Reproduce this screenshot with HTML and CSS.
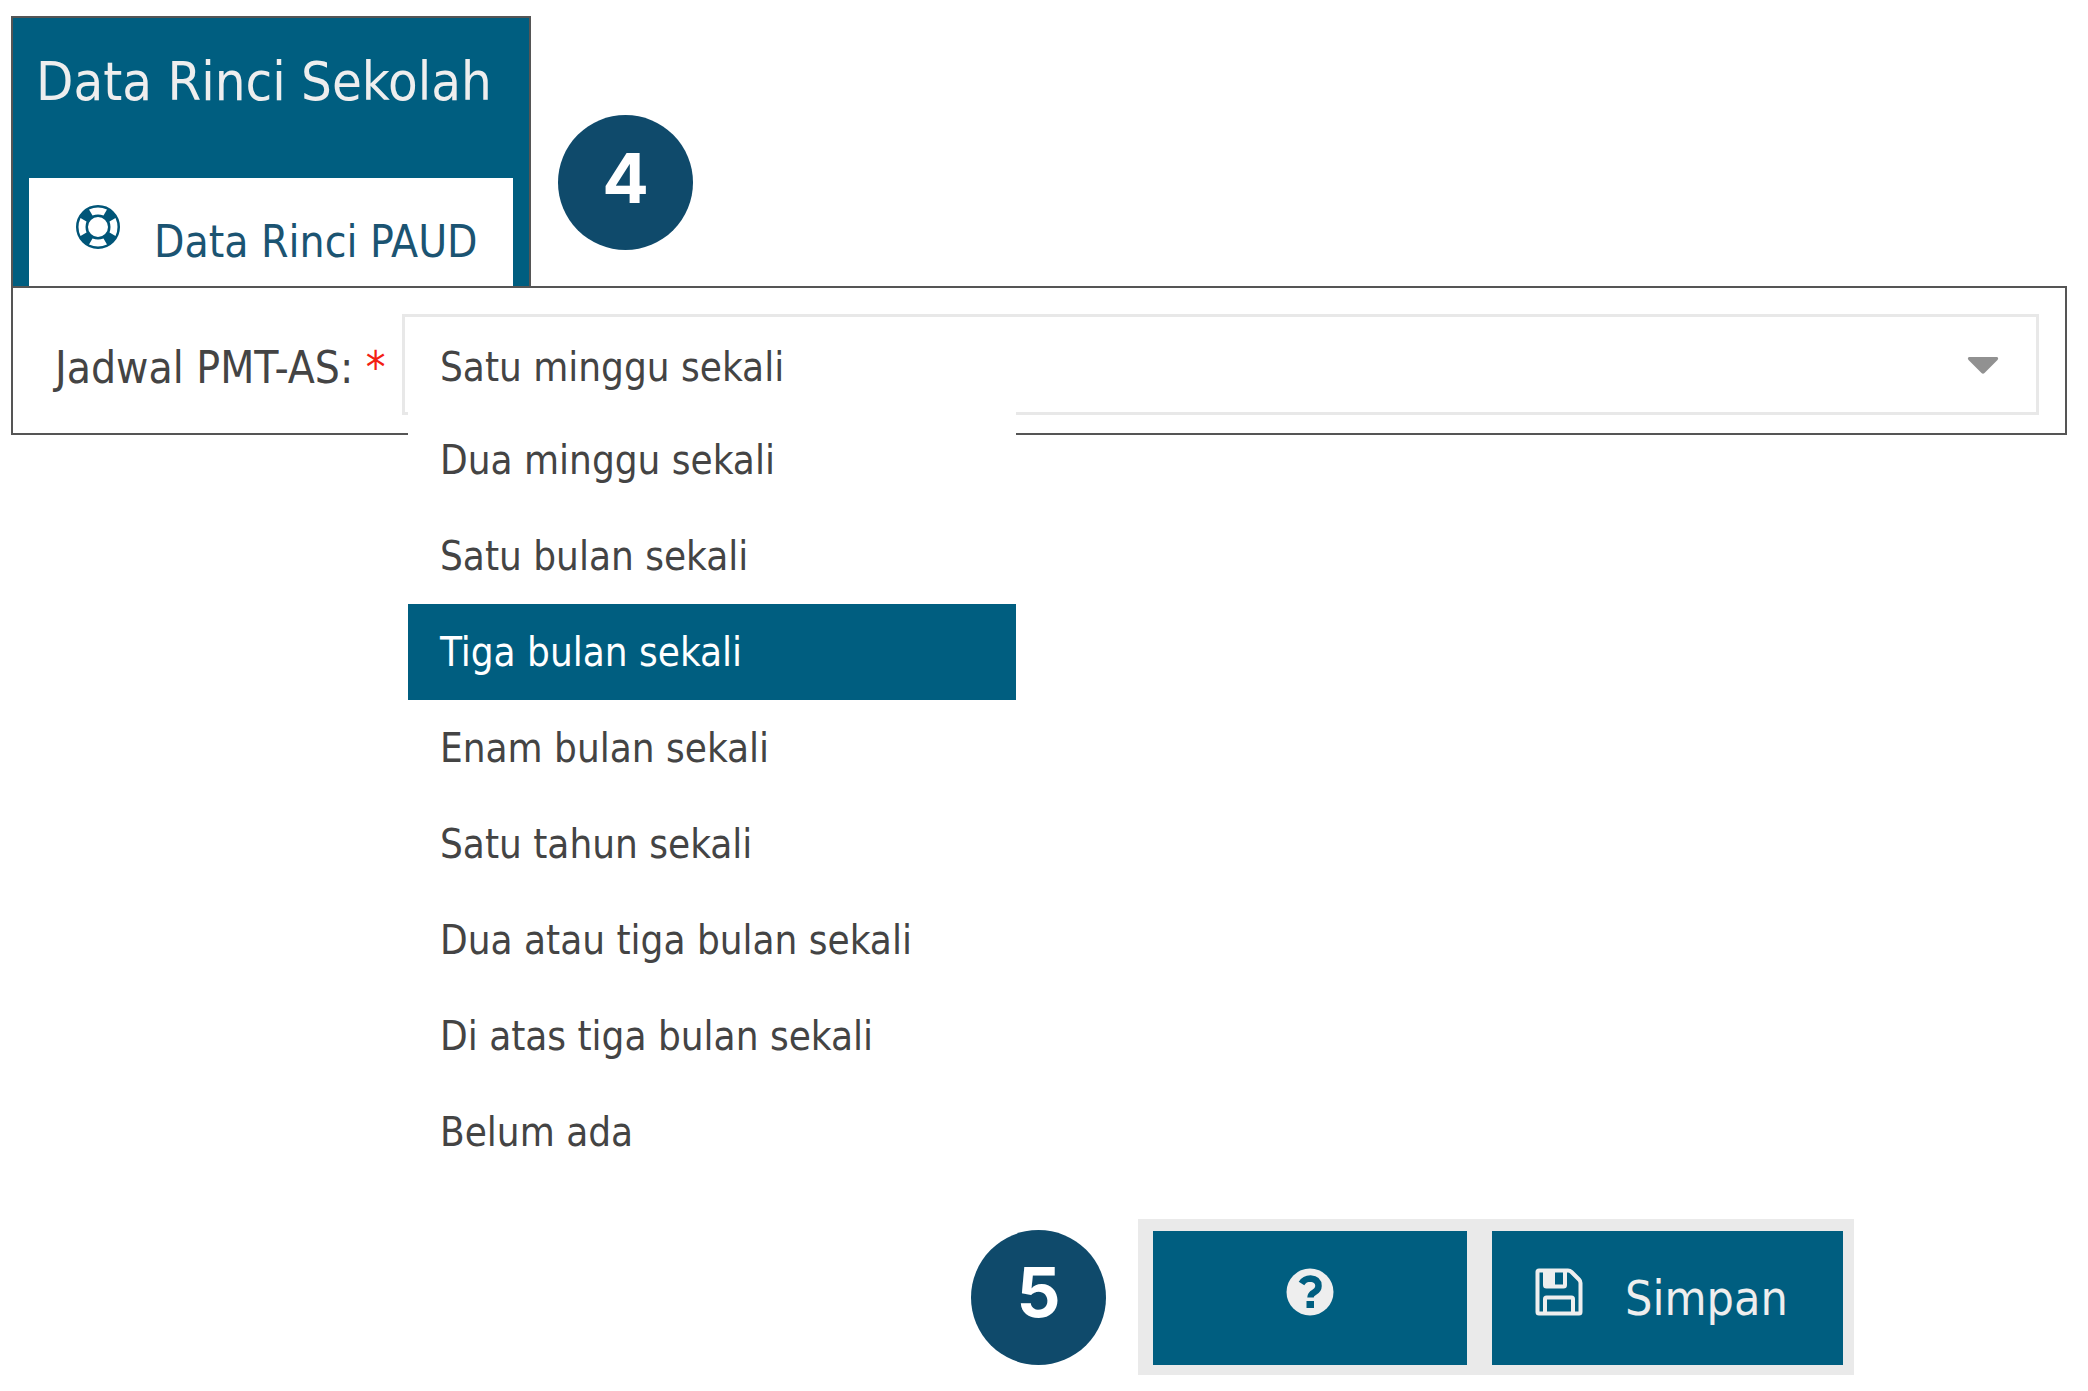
FILE: index.html
```html
<!DOCTYPE html>
<html lang="id">
<head>
    <meta charset="utf-8">
    <title>Data Rinci Sekolah</title>
    <link rel="stylesheet" href="styles.css">
</head>
<body>
    <div class="top-row">
        <div class="panel">
            <h1>Data Rinci Sekolah</h1>
            <button type="button" class="tab">
                <svg class="tab-icon" viewBox="0 0 44 44">
                    <circle cx="22" cy="22" r="16" fill="none" stroke="#005578" stroke-width="12"/>
                    <g fill="#fff">
                        <path d="M13 4.500Q22 0.500 31 4.500L27.500 10.500Q22 8.500 16.500 10.500Z"/>
                        <path d="M13 39.500Q22 43.500 31 39.500L27.500 33.500Q22 35.500 16.500 33.500Z"/>
                        <path d="M4.500 13Q0.500 22 4.500 31L10.500 27.500Q8.500 22 10.500 16.500Z"/>
                        <path d="M39.500 13Q43.500 22 39.500 31L33.500 27.500Q35.500 22 33.500 16.500Z"/>
                    </g>
                </svg>
                <span>Data Rinci PAUD</span>
            </button>
        </div>
        <div class="step">4</div>
    </div>

    <form class="form-row">
        <label for="jadwal">Jadwal PMT-AS: <span class="required">*</span></label>
        <div class="select-box">
            <select id="jadwal" name="jadwal">
                <option>Satu minggu sekali</option>
            </select>
            <svg class="arrow" viewBox="0 0 32 18"><path d="M2 0H30Q32 1 30.500 3L17.500 16Q16 17.500 14.500 16L1.500 3Q0 1 2 0Z" fill="#919191"/></svg>
            <ul class="menu" role="listbox" aria-label="Jadwal PMT-AS">
                <li role="option">Dua minggu sekali</li>
                <li role="option">Satu bulan sekali</li>
                <li role="option" class="active" aria-selected="true">Tiga bulan sekali</li>
                <li role="option">Enam bulan sekali</li>
                <li role="option">Satu tahun sekali</li>
                <li role="option">Dua atau tiga bulan sekali</li>
                <li role="option">Di atas tiga bulan sekali</li>
                <li role="option">Belum ada</li>
            </ul>
        </div>
    </form>

    <div class="footer">
        <div class="step">5</div>
        <div class="toolbar">
            <button type="button" class="help-button" aria-label="Bantuan">
                <svg class="button-icon" viewBox="0 0 48 48">
                    <circle cx="24" cy="24" r="23.500" fill="#eee"/>
                    <path d="M15.500 15.500Q18.500 10.500 24.500 10.500Q32.500 11 32.500 18Q32.500 22 28 24.500Q24.500 26.500 24.500 29.500" fill="none" stroke="#005e80" stroke-width="6.500"/>
                    <path d="M20.500 33H28V40H20.500Z" fill="#005e80"/>
                </svg>
            </button>
            <button type="button" class="save-button">
                <svg class="button-icon" viewBox="0 0 48 48" fill="none" stroke="#eee" stroke-width="4" stroke-linejoin="round">
                    <path d="M4 2.500H33Q35 2.500 36.500 4L44 11.500Q45.500 13 45.500 15V44Q45.500 45.500 44 45.500H4Q2.500 45.500 2.500 44V4Q2.500 2.500 4 2.500Z"/>
                    <path d="M10 3V17Q10 18.500 11.500 18.500H28.500Q30 18.500 30 17V3"/>
                    <path d="M10 3H20V18H10Z" fill="#eee" stroke="none"/>
                    <path d="M10 45V31Q10 29.500 11.500 29.500H36.500Q38 29.500 38 31V45"/>
                </svg>
                <span>Simpan</span>
            </button>
        </div>
    </div>
</body>
</html>
```

FILE: styles.css
```css
* {
    box-sizing: border-box;
}

body {
    background-color: #fff;
    color: #444;
    font-family: Tahoma, "DejaVu Sans Condensed", "Noto Sans", sans-serif;
    font-size: 40px;
    margin: 0;
    padding: 16px 21px 16px 11px;
    min-height: 100vh;
    display: flex;
    flex-direction: column;
}

button,
select {
    font-family: inherit;
    border: none;
    border-radius: 0;
    cursor: pointer;
}

.top-row {
    display: flex;
    gap: 27px;
}

.top-row .step {
    margin-top: 99px;
}

.panel {
    background-color: #005e80;
    border: 2px solid #555;
    border-bottom: none;
    width: 520px;
    padding: 32px 16px 0;
}

.panel h1 {
    color: #eee;
    font-size: 54px;
    font-weight: normal;
    line-height: 64px;
    white-space: nowrap;
    margin: 0 0 64px;
    padding-left: 7px;
}

.tab {
    background-color: #fff;
    color: #1b5472;
    font-size: 44px;
    line-height: 56px;
    width: 100%;
    height: 108px;
    padding: 27px 0 0 47px;
    display: flex;
    align-items: flex-start;
    gap: 34px;
    white-space: nowrap;
}

.tab span {
    padding-top: 9px;
}

.tab-icon {
    width: 44px;
    height: 44px;
    flex: none;
}

.step {
    background-color: #0f4a6b;
    color: #fff;
    border-radius: 50%;
    width: 135px;
    height: 135px;
    padding-bottom: 10px;
    font-family: Inter, sans-serif;
    font-size: 69px;
    font-weight: bold;
    display: flex;
    align-items: center;
    justify-content: center;
    flex: none;
}

.form-row {
    border: 2px solid #555;
    padding: 26px 26px 18px 42px;
    display: flex;
    align-items: center;
}

.form-row label {
    width: 347px;
    padding-top: 5px;
    font-size: 44px;
    flex: none;
    white-space: nowrap;
}

.required {
    color: #f32013;
}

.select-box {
    position: relative;
    flex: 1;
}

.select-box select {
    appearance: none;
    background-color: #fff;
    color: #444;
    border: 3px solid #e8e8e8;
    font-size: 40px;
    display: block;
    width: 100%;
    height: 101px;
    padding: 5px 35px 0;
}

.arrow {
    position: absolute;
    top: 43px;
    right: 40px;
    width: 32px;
    height: 18px;
    pointer-events: none;
}

.menu {
    position: absolute;
    top: 98px;
    left: 6px;
    width: 608px;
    background-color: #fff;
    list-style: none;
    margin: 0;
    padding: 0;
    z-index: 1;
}

.menu li {
    line-height: 96px;
    padding-left: 32px;
    cursor: pointer;
}

.menu .active {
    background-color: #005e80;
    color: #fff;
}

.footer {
    margin-top: auto;
    padding-right: 213px;
    display: flex;
    justify-content: flex-end;
    align-items: center;
    gap: 32px;
}

.toolbar {
    background-color: #eaeaea;
    display: flex;
    gap: 25px;
    padding: 12px 11px 10px 15px;
}

.toolbar button {
    background-color: #005e80;
    color: #eee;
    font-size: 48px;
    height: 134px;
    display: flex;
    align-items: center;
}

.help-button {
    width: 314px;
    justify-content: center;
}

.save-button {
    width: 351px;
    padding: 0 43px;
    gap: 42px;
}

.button-icon {
    width: 48px;
    height: 48px;
    margin-bottom: 12px;
    flex: none;
}
```
